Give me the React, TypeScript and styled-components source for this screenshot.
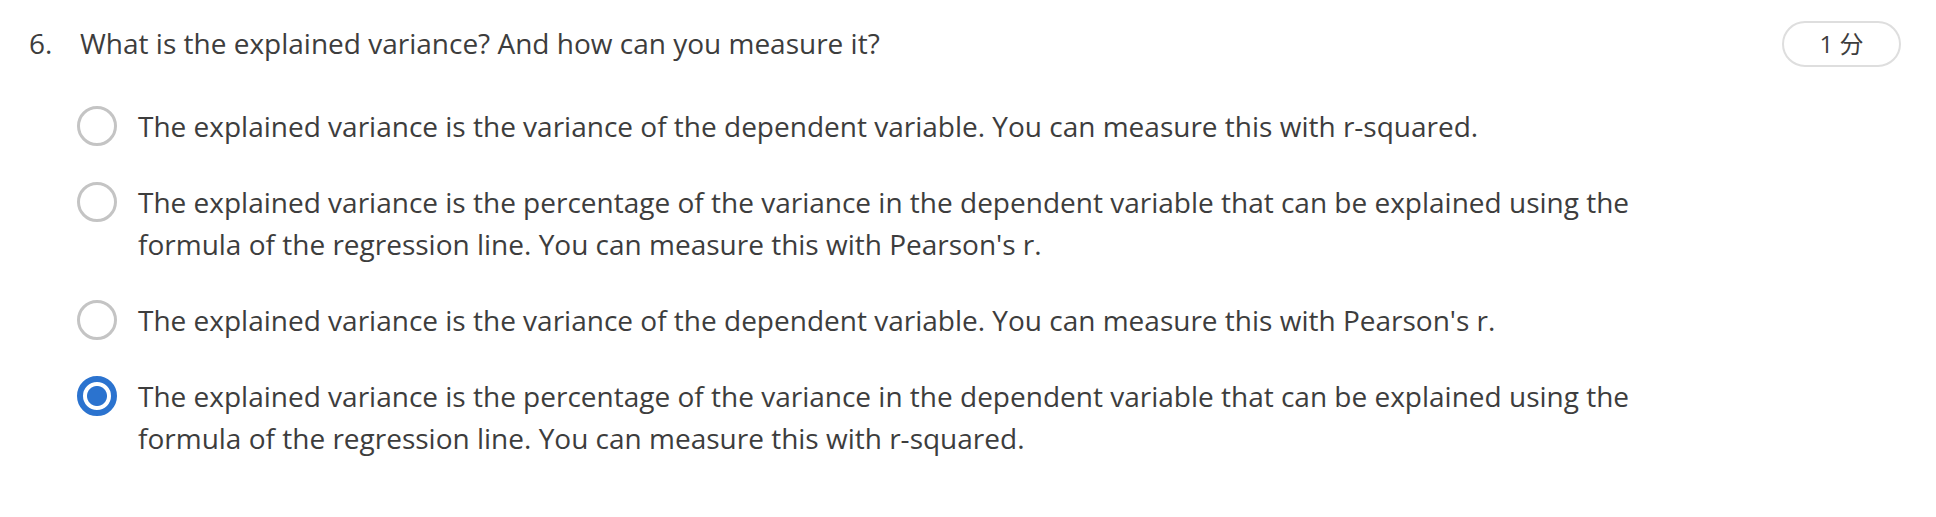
import styled, { createGlobalStyle } from "styled-components";

const GlobalStyle = createGlobalStyle`
  html, body {
    margin: 0;
    padding: 0;
    background: #ffffff;
  }
  body {
    font-family: "Open Sans", "Noto Sans CJK SC", sans-serif;
    color: #3d3d3d;
  }
`;

interface OptionData {
    text: string,
    checked?: boolean
}

const options: OptionData[] = [
    {text: "The explained variance is the variance of the dependent variable. You can measure this with r-squared."},
    {text: "The explained variance is the percentage of the variance in the dependent variable that can be explained using the formula of the regression line. You can measure this with Pearson's r."},
    {text: "The explained variance is the variance of the dependent variable. You can measure this with Pearson's r."},
    {text: "The explained variance is the percentage of the variance in the dependent variable that can be explained using the formula of the regression line. You can measure this with r-squared.", checked: true},
];

const App = () => {
    return (
        <Question>
            <GlobalStyle/>
            <Header>
                <Number>6.</Number>
                <Title>What is the explained variance? And how can you measure it?</Title>
                <Points>1 分</Points>
            </Header>
            <OptionList>
                {options.map((o, i) => (
                    <Option key={i}>
                        <Radio checked={!!o.checked}/>
                        <OptionText>{o.text}</OptionText>
                    </Option>
                ))}
            </OptionList>
        </Question>
    )
}

export default App;

const Question = styled.div`
  width: 1936px;
  padding: 18px 32px 0 29px;
  box-sizing: border-box;
`;

const Header = styled.div`
  display: flex;
  align-items: center;
  font-size: 28px;
  line-height: 50px;
`;

const Number = styled.span`
  width: 51px;
  flex-shrink: 0;
`;

const Title = styled.span`
  flex: 1;
`;

const Points = styled.span`
  width: 119px;
  height: 46px;
  box-sizing: border-box;
  border: 2px solid #dedede;
  border-radius: 23px;
  display: flex;
  align-items: center;
  justify-content: center;
  font-size: 24px;
  line-height: 1;
  color: #3d3d3d;
  margin: 2px 3px 0 0;
`;

const OptionList = styled.div`
  display: flex;
  flex-direction: column;
  gap: 34px;
  padding: 37px 0 0 48px;
`;

const Option = styled.label`
  display: flex;
  align-items: flex-start;
  gap: 21px;
`;

const Radio = styled.span<{checked: boolean}>`
  width: 40px;
  height: 40px;
  flex-shrink: 0;
  box-sizing: border-box;
  border-radius: 50%;
  border: ${p => p.checked ? "6px solid #2b73cf" : "3.5px solid #c4c4c4"};
  background: ${p => p.checked ? "radial-gradient(circle, #2b73cf 0 9.5px, #fff 10.5px)" : "#fff"};
  margin-top: 1px;
`;

const OptionText = styled.span`
  font-size: 28px;
  line-height: 42px;
  max-width: 1520px;
`;
